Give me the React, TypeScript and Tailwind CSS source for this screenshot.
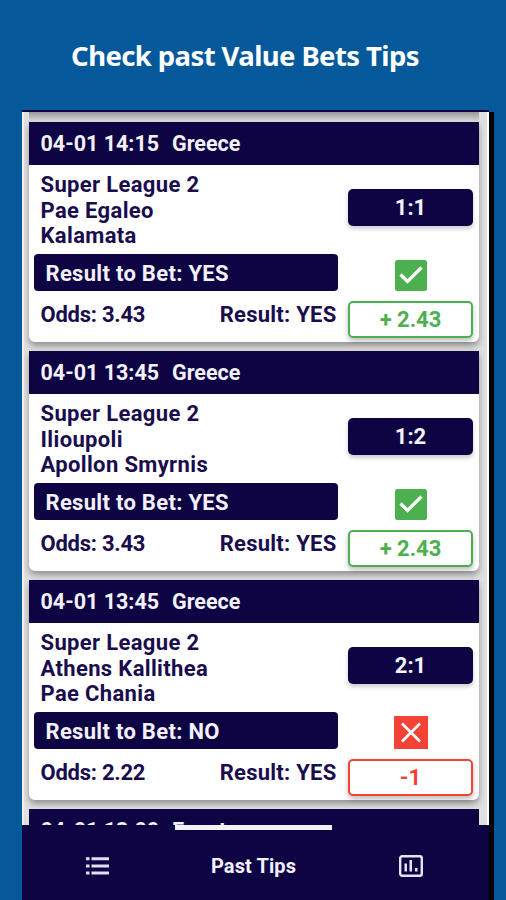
import React from 'react';
import clsx from 'clsx';

interface Tip {
  date: string;
  country: string;
  league: string;
  home: string;
  away: string;
  score: string;
  bet: string;
  odds: string;
  result: string;
  profit: string;
  won: boolean;
}

const tips: Tip[] = [
  {
    date: '04-01 14:15',
    country: 'Greece',
    league: 'Super League 2',
    home: 'Pae Egaleo',
    away: 'Kalamata',
    score: '1:1',
    bet: 'YES',
    odds: '3.43',
    result: 'YES',
    profit: '+ 2.43',
    won: true,
  },
  {
    date: '04-01 13:45',
    country: 'Greece',
    league: 'Super League 2',
    home: 'Ilioupoli',
    away: 'Apollon Smyrnis',
    score: '1:2',
    bet: 'YES',
    odds: '3.43',
    result: 'YES',
    profit: '+ 2.43',
    won: true,
  },
  {
    date: '04-01 13:45',
    country: 'Greece',
    league: 'Super League 2',
    home: 'Athens Kallithea',
    away: 'Pae Chania',
    score: '2:1',
    bet: 'NO',
    odds: '2.22',
    result: 'YES',
    profit: '-1',
    won: false,
  },
];

function WonIcon() {
  return (
    <svg width="32" height="31" viewBox="0 0 32 31" className="block">
      <rect width="32" height="31" rx="2.5" fill="#4caf50" />
      <path d="M5.5 14.5 12.5 21.5 26.5 7.5" fill="none" stroke="#fff" strokeWidth="3.2" />
    </svg>
  );
}

function LostIcon() {
  return (
    <svg width="34" height="33" viewBox="0 0 34 33" className="block">
      <rect width="34" height="33" fill="#f44336" />
      <path d="M8 7.5 26 25.5M26 7.5 8 25.5" fill="none" stroke="#fff" strokeWidth="2.6" />
    </svg>
  );
}

function CardHeader({ date, country }: { date: string; country: string }) {
  return (
    <div className="flex h-[43px] items-center bg-[#0e0444] pt-px pl-3 text-[21.5px] text-[#f3f1fb]">
      <span className="w-[131.5px]">{date}</span>
      <span>{country}</span>
    </div>
  );
}

function TipCard({ tip }: { tip: Tip }) {
  return (
    <div className="h-[220px] rounded-b-md bg-white shadow-[0_4px_6px_rgba(0,0,0,0.35)]">
      <CardHeader date={tip.date} country={tip.country} />
      <div className="flex justify-between pr-[6px] pl-[5px]">
        <div className="w-[304.5px] pt-[7px]">
          <div className="pl-[7px] leading-[25.5px] tracking-[0.35px]">
            <p>{tip.league}</p>
            <p>{tip.home}</p>
            <p>{tip.away}</p>
          </div>
          <div className="mt-[5.5px] flex h-[37px] items-center rounded-[4px] bg-[#0e0444] pt-px pl-3 tracking-[0.3px] text-[#f3f1fb]">
            Result to Bet: {tip.bet}
          </div>
          <div className="mt-[11px] flex justify-between pr-[1.5px] pl-[7px] leading-[25px]">
            <span className="tracking-[-0.25px]">Odds: {tip.odds}</span>
            <span className="tracking-[0.25px]">Result: {tip.result}</span>
          </div>
        </div>
        <div className="flex w-[125px] flex-col items-center pt-6">
          <div className="flex h-[37px] w-full items-center justify-center rounded-[5px] bg-[#0e0444] text-[#f3f1fb] shadow-[0_3px_4px_rgba(0,0,0,0.2)]">
            {tip.score}
          </div>
          <div className="flex h-[75px] items-end justify-center pb-[10px]">
            {tip.won ? <WonIcon /> : <LostIcon />}
          </div>
          <div
            className={clsx(
              'flex h-[37px] w-full items-center justify-center rounded-[5px] border-2 bg-white shadow-[0_3px_5px_rgba(0,0,0,0.25)]',
              tip.won ? 'border-[#4caf50] text-[#4caf50]' : 'border-[#f44336] text-[#f44336]'
            )}
          >
            {tip.profit}
          </div>
        </div>
      </div>
    </div>
  );
}

function BottomNav() {
  return (
    <nav className="relative flex h-[75px] items-center bg-[#0e0444] pt-[7px] text-[#f3f1fb]">
      <div className="absolute top-0 left-[153px] h-[5px] w-[157px] bg-[#f3f1fb]" />
      <div className="flex w-[153px] justify-center pr-[3px]">
        <svg width="23" height="18" viewBox="0 0 23 18" fill="#e2def2">
          <path d="M0 0.2h3.5v3H0zM5.5 0.2H23v3H5.5zM0 7.4h3.5v3H0zM5.5 7.4H23v3H5.5zM0 14.6h3.5v3H0zM5.5 14.6H23v3H5.5z" />
        </svg>
      </div>
      <span className="w-[157px] text-center text-[20px] tracking-[0.1px]">Past Tips</span>
      <div className="flex flex-1 justify-center">
        <svg width="24" height="22" viewBox="0 0 24 22" fill="#e6e3f5">
          <rect x="1.2" y="1.2" width="21.6" height="19.6" rx="2" fill="none" stroke="#e6e3f5" strokeWidth="2.4" />
          <path d="M5.5 8.5H8v8H5.5zM10.5 5H13v11.5h-2.5zM16 13h2.5v3.5H16z" />
        </svg>
      </div>
    </nav>
  );
}

export default function App() {
  return (
    <div className="flex h-[900px] w-[506px] flex-col overflow-hidden bg-[#05599b]">
      <h1 className="h-[110px] pt-[37px] pr-[16px] text-center font-['Noto_Sans',sans-serif] text-[27.5px] leading-[38px] font-bold tracking-[-0.6px] text-white">
        Check past Value Bets Tips
      </h1>
      <div className="ml-[22px] flex w-[467px] flex-1 flex-col border-t-2 border-[#0e0444] bg-[#e0e0e0] font-[Roboto,sans-serif] text-[22px] font-bold text-[#1a0d4e] shadow-[5px_2px_0_#000]">
        <main className="h-[713px] overflow-hidden border-r-2 border-l-2 border-r-white border-l-[#f0f0f0] pr-[8px] pl-[4.5px]">
          <div className="h-[10px] bg-linear-to-b from-[#999999] to-[#dedede]" />
          <div className="flex flex-col gap-[9px]">
            {tips.map((tip) => (
              <TipCard key={tip.away} tip={tip} />
            ))}
            <CardHeader date="04-01 13:00" country="Egypt" />
          </div>
        </main>
        <BottomNav />
      </div>
    </div>
  );
}
